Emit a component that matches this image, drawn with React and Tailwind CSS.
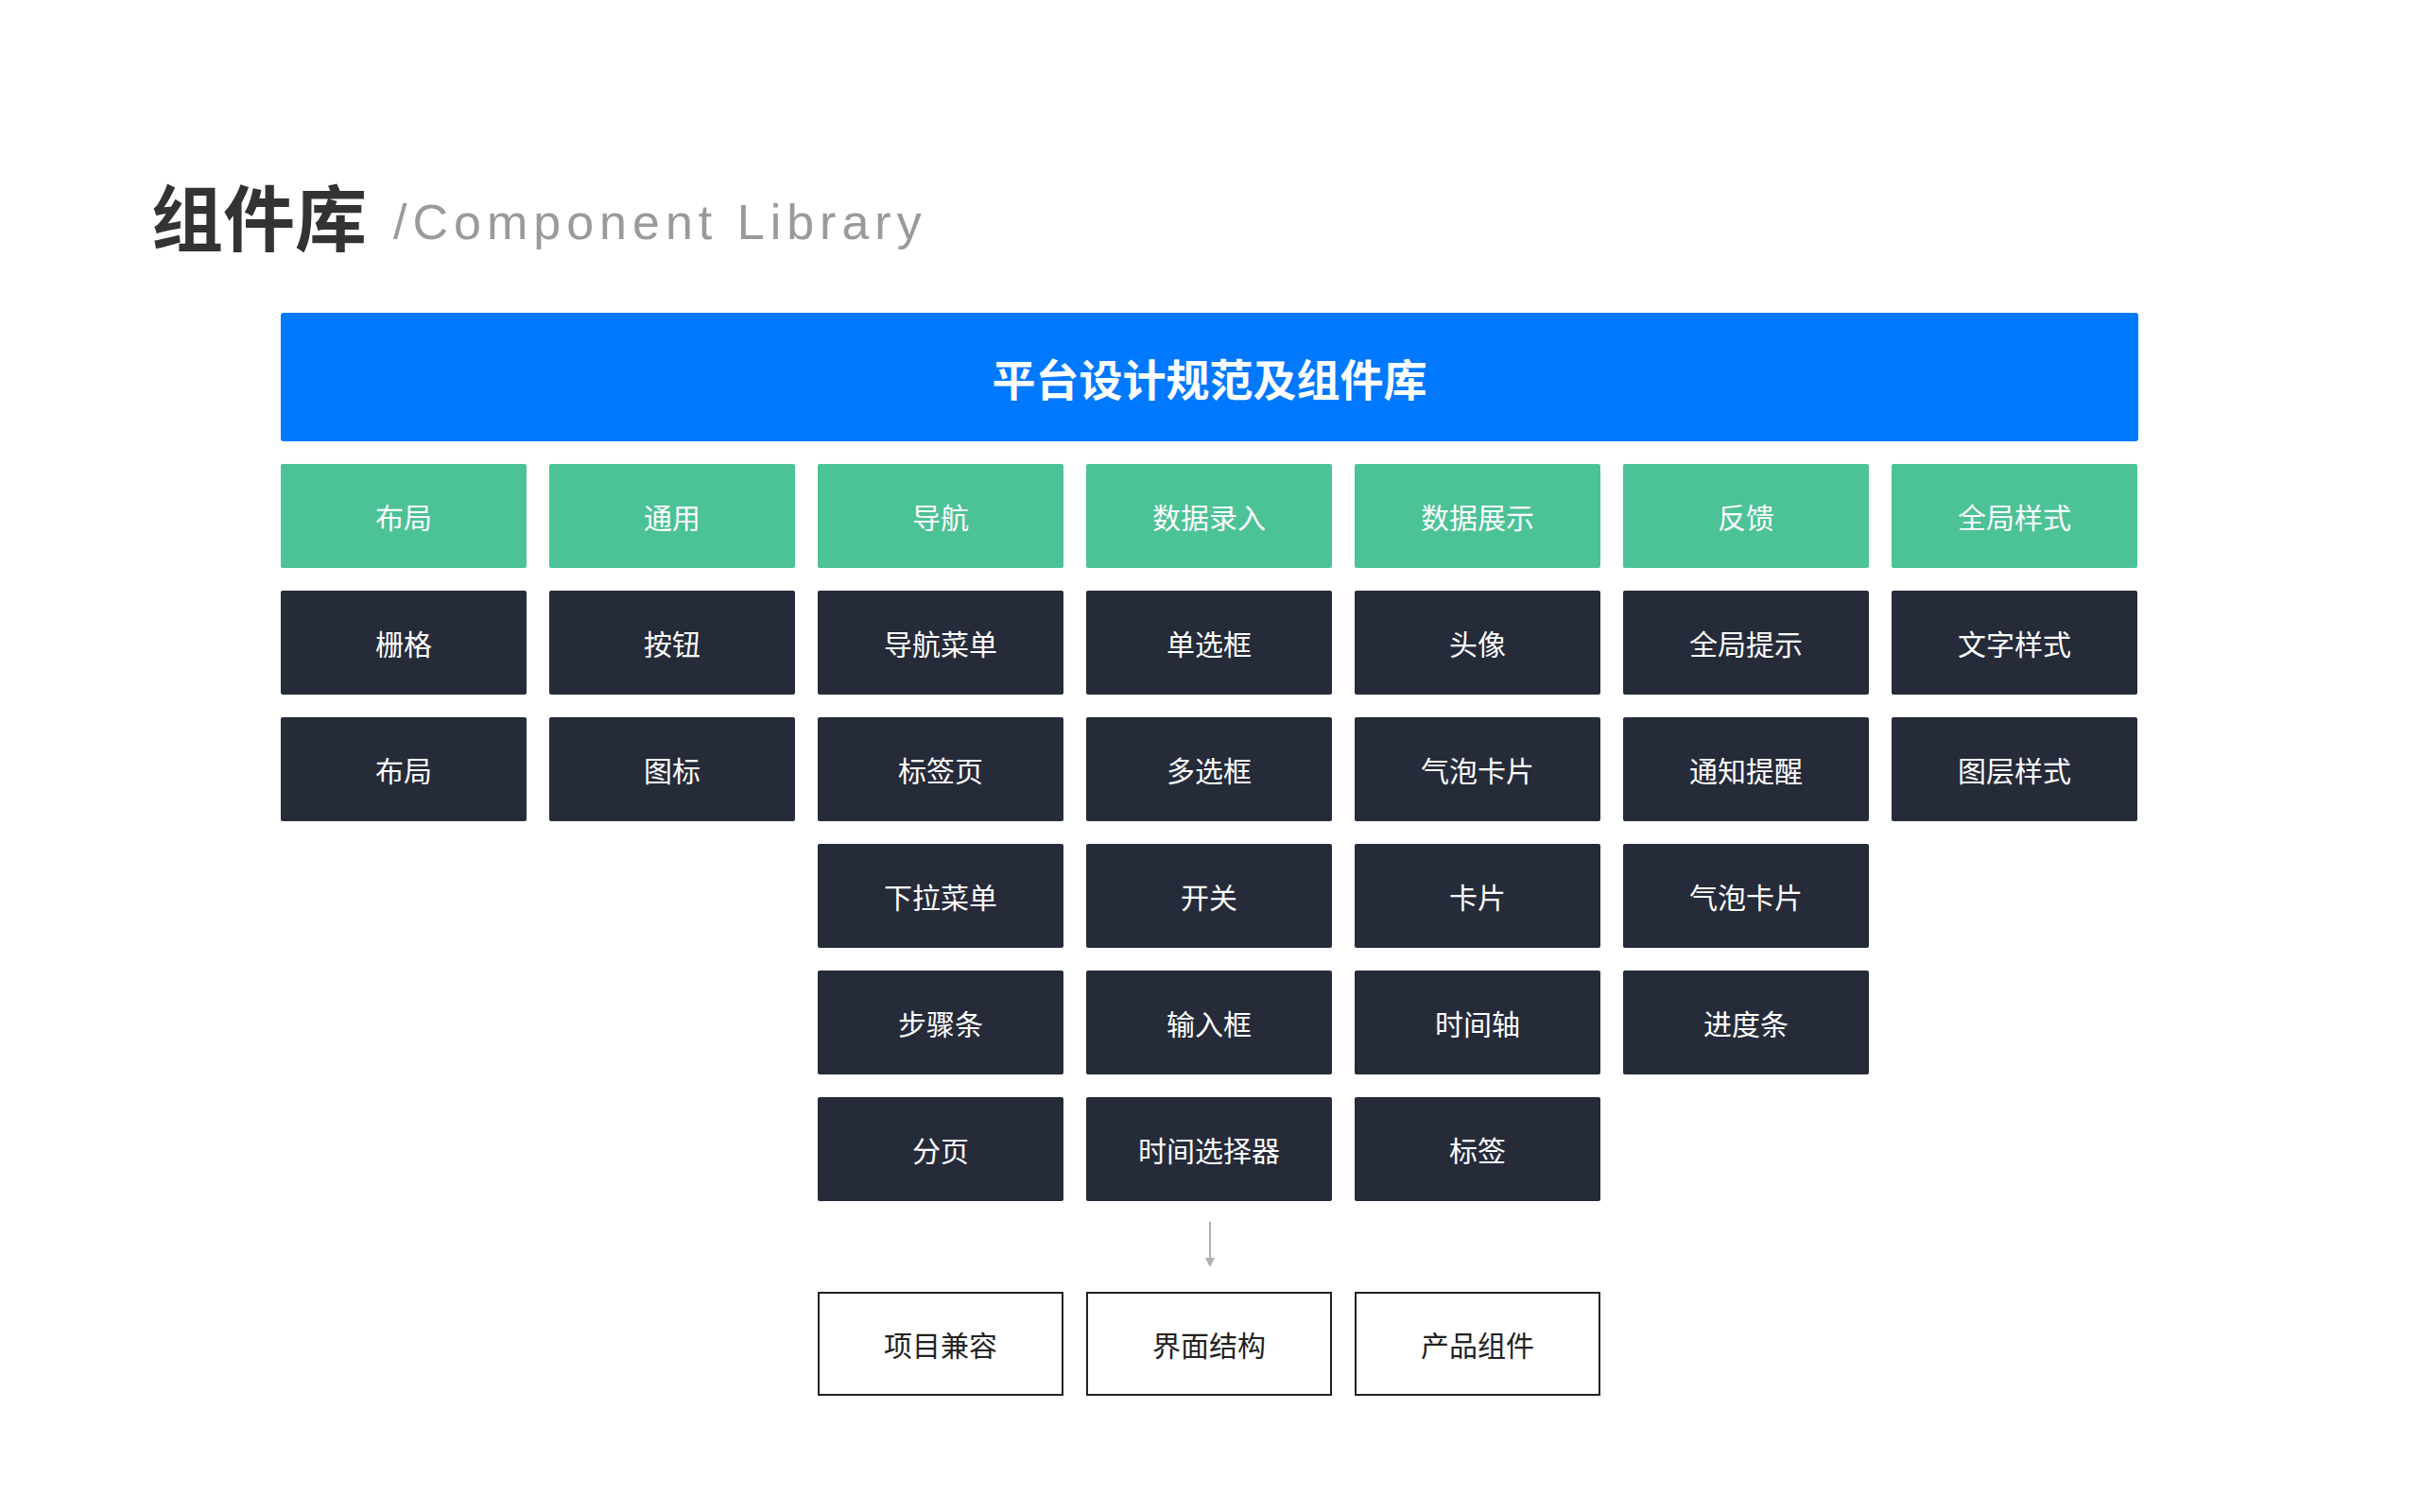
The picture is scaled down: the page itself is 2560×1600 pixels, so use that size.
const cols = [
  ["布局", ["栅格", "布局"]],
  ["通用", ["按钮", "图标"]],
  ["导航", ["导航菜单", "标签页", "下拉菜单", "步骤条", "分页"]],
  ["数据录入", ["单选框", "多选框", "开关", "输入框", "时间选择器"]],
  ["数据展示", ["头像", "气泡卡片", "卡片", "时间轴", "标签"]],
  ["反馈", ["全局提示", "通知提醒", "气泡卡片", "进度条"]],
  ["全局样式", ["文字样式", "图层样式"]],
];
const font = { fontFamily: '"Noto Sans CJK SC", "Noto Sans", sans-serif' };

export default function App() {
  return (
    <div className="w-[2560px] h-[1600px] bg-white relative" style={font}>
      <div className="flex items-end pt-[160px] pl-[160px] h-[265px]">
        <span className="text-[76px] font-bold text-[#333] leading-none">组件库</span>
        <span className="ml-[28px] mb-[4px] text-[52px] leading-none text-[#9a9a9a] tracking-[6px] font-light" style={{ fontFamily: '"Liberation Sans", sans-serif' }}>/Component Library</span>
      </div>
      <div className="ml-[297px] mt-[66px] w-[1965px]">
        <div className="h-[136px] bg-[#0079FE] rounded-[3px] flex items-center justify-center text-white text-[46px] font-bold">平台设计规范及组件库</div>
        <div className="flex gap-[24px] mt-[24px]">
          {cols.map(([h, items], i) => (
            <div key={i} className="w-[260px] flex flex-col gap-[24px]">
              <div className="h-[110px] bg-[#4CC297] rounded-[2px] flex items-center justify-center text-white text-[30px]">{h}</div>
              {items.map((t, j) => (
                <div key={j} className="h-[110px] bg-[#262B3A] rounded-[2px] flex items-center justify-center text-white text-[30px]">{t}</div>
              ))}
            </div>
          ))}
        </div>
        <div className="flex flex-col items-center mt-[22px] h-[48px]">
          <div className="w-[2px] h-[38px] bg-[#b0b0b0]"></div>
          <div className="w-0 h-0 border-l-[5px] border-r-[5px] border-t-[10px] border-l-transparent border-r-transparent border-t-[#b0b0b0]"></div>
        </div>
        <div className="flex gap-[24px] mt-[26px] ml-[568px]">
          {["项目兼容", "界面结构", "产品组件"].map((t) => (
            <div key={t} className="w-[260px] h-[110px] border-2 border-[#222] flex items-center justify-center text-[#222] text-[30px]">{t}</div>
          ))}
        </div>
      </div>
    </div>
  );
}
